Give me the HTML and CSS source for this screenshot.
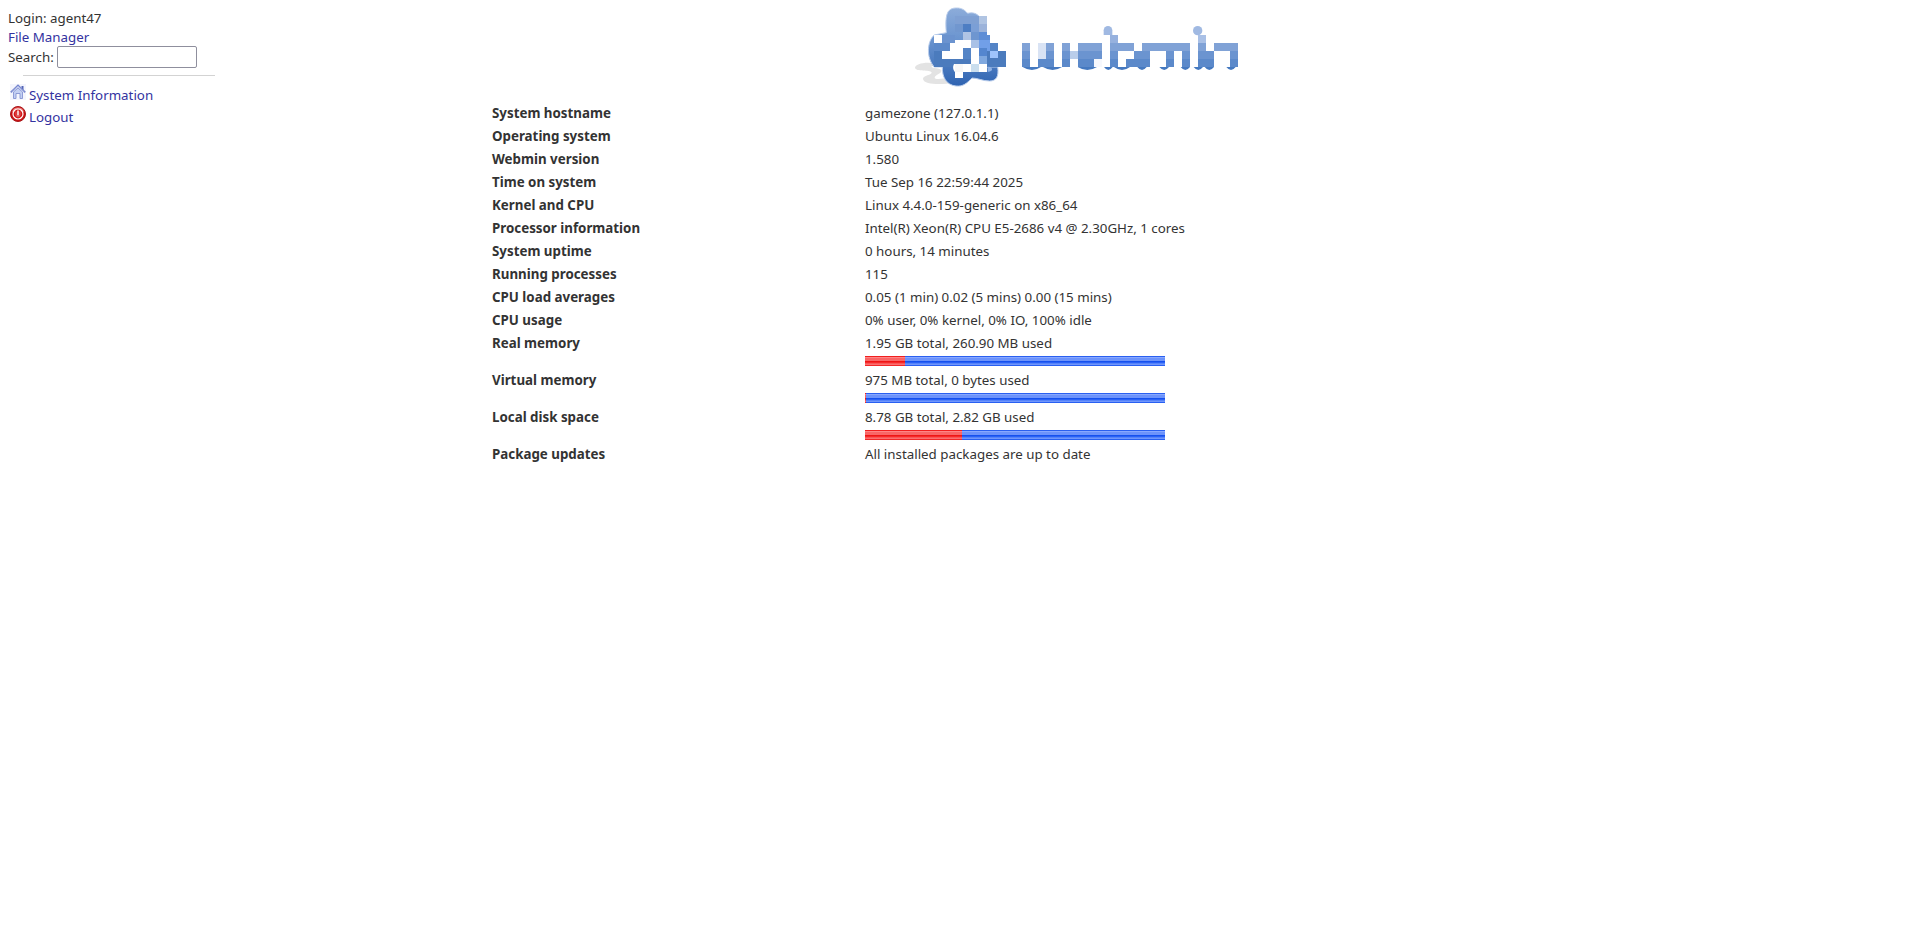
FILE: index.html
```html
<!DOCTYPE html>
<html lang="en">
<head>
<meta charset="utf-8">
<title>Webmin</title>
<link rel="stylesheet" href="styles.css">
</head>
<body>
<aside class="sidebar">
  <div class="line">Login: agent47</div>
  <div class="line"><a href="#">File Manager</a></div>
  <label class="search">Search: <input type="text"></label>
  <hr>
  <a class="item" href="#">
    <svg class="icon" viewBox="0 0 16 16"><rect width="16" height="16" fill="#f4f5fd"/><path d="M11.500 2h2v4h-2z" fill="#5364b5"/><path d="M3.500 8 8 4l4.500 4v6.500h-2.500V9.500H6v5H3.500z" fill="#c3cff2" stroke="#8593d3" stroke-width=".9"/><path d="M.8 8.300 8 1.500l7.200 6.800" fill="none" stroke="#7282cb" stroke-width="1.800"/><path d="M1.600 8 8 2l6.400 6" fill="none" stroke="#c3cdf2" stroke-width=".7"/></svg>
    <span>System Information</span></a>
  <a class="item" href="#">
    <svg class="icon" viewBox="0 0 16 16"><circle cx="8" cy="8" r="7.500" fill="#cc1013" stroke="#a8181a"/><path d="M2 6a6.300 6.300 0 0 1 12 0q-6-3-12 0z" fill="#ee8582"/><circle cx="8" cy="8" r="5" fill="#d3181a" stroke="#fff" stroke-width="1.200"/><path d="M6 5.500v3.300a2 2 0 0 0 4 0V5.500" fill="none" stroke="#e98080" stroke-width=".7"/><path d="M8 4.500v5" stroke="#fff" stroke-width="1.500"/></svg>
    <span>Logout</span></a>
</aside>
<main class="main">
  <svg class="logo" viewBox="0 0 1035 285" role="img" aria-label="Webmin">
    <defs>
      <linearGradient id="blue" gradientUnits="userSpaceOnUse" x1="0" y1="20" x2="0" y2="260"><stop offset="0" stop-color="#8eadda"/><stop offset=".4" stop-color="#6b95d0"/><stop offset="1" stop-color="#2e63b1"/></linearGradient>
    </defs>
    <path d="M90 190C60 184 30 192 30 203c2 13 46 5 50 14 2 9-27 9-26 20 3 19 63 17 90 11l-10-17c-23 7-45 8-45 2 1-9 23-12 20-22-3-8-28-6-30-11 2-4 13-3 27-2z" fill="#e3e3e3"/>
    <path d="M124 98C119 38 129 24 155 24c17 0 24 7 33 16 12-3 24-2 34 9v152h56c4 28-4 42-24 42-22 0-35-9-53-9-16 16-26 26-48 24-29-3-42-27-41-57H88C63 173 66 123 88 105z" fill="url(#blue)" stroke="#b9cdec" stroke-width="3"/>
    <g shape-rendering="crispEdges">
      <path fill="#7fa0d3" d="M150 48h72v24h-72z"/><path fill="#b0c4e2" d="M222 48h24v24h-24z"/>
      <path fill="#7197cf" d="M150 72h24v24h-24z"/><path fill="#4e7ec3" d="M174 72h24v24h-24z"/><path fill="#7b9fd6" d="M198 72h24v24h-24z"/><path fill="#9cb3da" d="M222 72h24v24h-24z"/>
      <path fill="#6b93cf" d="M111 105h39v24h-39z"/><path fill="#b0c4e4" d="M174 96h24v24h-24z"/><path fill="#6e96d0" d="M198 96h24v24h-24z"/><path fill="#5d8dd6" d="M222 96h24v24h-24z"/>
      <path fill="#5d8aca" d="M87 129h48v24H87z"/><path fill="#a9c1e6" d="M198 120h24v24h-24z"/><path fill="#5d8dd6" d="M246 105h9v15h-9z"/>
      <path fill="#5484c6" d="M255 129h23v24h-23zM174 144h24v32h-24z"/>
      <path fill="#4b7bbd" d="M87 153h24v24h24v-1h63v16h48v-39h56v48H87z"/>
      <path fill="#9ec3fb" d="M255 153h23v20h-23z"/><path fill="#5486cf" d="M222 144h24v24h-24z"/><path fill="#719fe8" d="M222 120h33v24h-33zM246 144h9v9h-9z"/><path fill="#7fa8df" d="M222 168h24v24h-24z"/>
      <path fill="#fff" d="M87 105h24v24H87zM150 120h48v24h-24v32h-63v-23h24v-24h15zM198 144h24v48h-24z"/>
    </g>
    <path d="M147 192h99v24h-72v18h-24v-17q-10-12-3-25z" fill="#fff"/>
    <path d="M248 200q13-1 13 8 0 6-9 7h-4z" fill="#8fb2e5"/>
    <path fill="#cadeee" d="M198 192h24v24h-24z"/><path fill="#f7f7f7" d="M150 192h24v24h-24z"/>
    <g fill="#a0b9e2"><path d="M596 105V91a13 13 0 0 1 26 0v14z"/><circle cx="878" cy="92" r="14"/></g>
    <g shape-rendering="crispEdges">
      <path fill="#96b1de" d="M615 105h24v24h-24z"/><path fill="#a9c0e6" d="M879 105h24v24h-24z"/>
      <path fill="#80a2d6" d="M351 129h24v24h-24zM423 129h24v24h-24zM471 129h24v24h-24zM519 129h72v24h-72zM615 129h72v24h-72zM711 129h144v24H711zM879 129h24v24h-24zM927 129h72v24h-72z"/>
      <path fill="#6b94d0" d="M351 153h24v24h-24zM423 153h24v24h-24zM471 153h24v24h-24zM519 153h72v24h-72zM615 153h24v24h-24zM687 153h48v24h-48zM783 153h24v24h-24zM831 153h24v24h-24zM879 153h48v24h-48zM975 153h24v24h-24z"/>
      <path fill="#5b89ca" d="M351 177h24v24h-24zM399 177h48v24h-48zM471 177h24v24h-24zM519 177h48v24h-48zM615 177h24v24h-24zM663 177h72v24h-72zM783 177h24v24h-24zM831 177h24v24h-24zM879 177h48v24h-48zM975 177h24v24h-24z"/>
      <path fill="#d9e3f4" d="M399 129h24v48h-24z"/><path fill="#b9cdea" d="M495 153h24v24h-24z"/><path fill="#f6f8fd" d="M567 177h24v24h-24z"/>
    </g>
    <path fill="#4579c0" d="M353 201h55q-27 18-55 0zM414 201h57q-28 18-57 0zM518 201h58q-29 18-58 0zM597 201h26q-13 18-26 0zM627 201h48q-24 18-48 0zM697 201h28q-14 18-28 0zM763 201h29q-14 18-29 0zM827 201h28q-14 18-28 0zM866 201h28q-14 18-28 0zM899 201h28q-14 18-28 0zM964 201h28q-14 18-28 0z"/>
  </svg>
  <dl class="info">
    <dt>System hostname</dt><dd>gamezone (127.0.1.1)</dd>
    <dt>Operating system</dt><dd>Ubuntu Linux 16.04.6</dd>
    <dt>Webmin version</dt><dd>1.580</dd>
    <dt>Time on system</dt><dd>Tue Sep 16 22:59:44 2025</dd>
    <dt>Kernel and CPU</dt><dd>Linux 4.4.0-159-generic on x86_64</dd>
    <dt>Processor information</dt><dd>Intel(R) Xeon(R) CPU E5-2686 v4 @ 2.30GHz, 1 cores</dd>
    <dt>System uptime</dt><dd>0 hours, 14 minutes</dd>
    <dt>Running processes</dt><dd>115</dd>
    <dt>CPU load averages</dt><dd>0.05 (1 min) 0.02 (5 mins) 0.00 (15 mins)</dd>
    <dt>CPU usage</dt><dd>0% user, 0% kernel, 0% IO, 100% idle</dd>
    <dt>Real memory</dt><dd>1.95 GB total, 260.90 MB used<div class="bar"><div class="used" style="width:40px"></div></div></dd>
    <dt>Virtual memory</dt><dd>975 MB total, 0 bytes used<div class="bar"><div class="used" style="width:1px"></div></div></dd>
    <dt>Local disk space</dt><dd>8.78 GB total, 2.82 GB used<div class="bar"><div class="used" style="width:97px"></div></div></dd>
    <dt>Package updates</dt><dd>All installed packages are up to date</dd>
  </dl>
</main>
</body>
</html>
```
FILE: styles.css
```css
body {
  margin: 0;
  display: flex;
  background: #fff;
  color: #333;
  font: 13.333px/19px "Noto Sans", sans-serif;
}
a { color: #33339f; text-decoration: none; }
.sidebar { width: 215px; padding: 9px 0 0 8px; flex: none; box-sizing: border-box; }
.line { height: 19px; }
.search { display: flex; align-items: center; height: 22px; margin-top: -1px; gap: 3px; }
.search input {
  width: 140px;
  height: 22px;
  box-sizing: border-box;
  border: 1px solid #8f8f9d;
  border-radius: 2px;
  background: #fff;
}
hr { height: 1px; border: 0; background: #d3d3d3; margin: 7px 0 8px 15px; }
.item { display: flex; gap: 3px; padding-left: 2px; height: 22px; }
.item span { padding-top: 2px; }
.icon { width: 16px; height: 16px; flex: none; }
.main { padding-left: 277px; }
.logo { display: block; width: 345px; height: 95px; margin: 0 0 6px 413px; }
.info { display: grid; grid-template-columns: 373px auto; row-gap: 4px; margin: 0; padding-top: 3px; }
.info dt { font-weight: bold; }
.info dd { margin: 0; }
.bar {
  width: 300px;
  height: 10px;
  margin: 3px 0 1px;
  background: linear-gradient(#2a60f0 1px, #88a8ff 1px 2px, #6c93fb 2px 5px, #1550ee 5px 6px, #2a62f5 6px 7px, #5583fa 7px 8px, #7096fb 8px 9px, #2860f2 9px);
}
.used { height: 10px; background: linear-gradient(#f01f1f 1px, #ff8585 1px 2px, #f96666 2px 5px, #ee1515 5px 6px, #f62a2a 6px 7px, #fa5555 7px 8px, #fa7070 8px 9px, #f22828 9px); }
```
